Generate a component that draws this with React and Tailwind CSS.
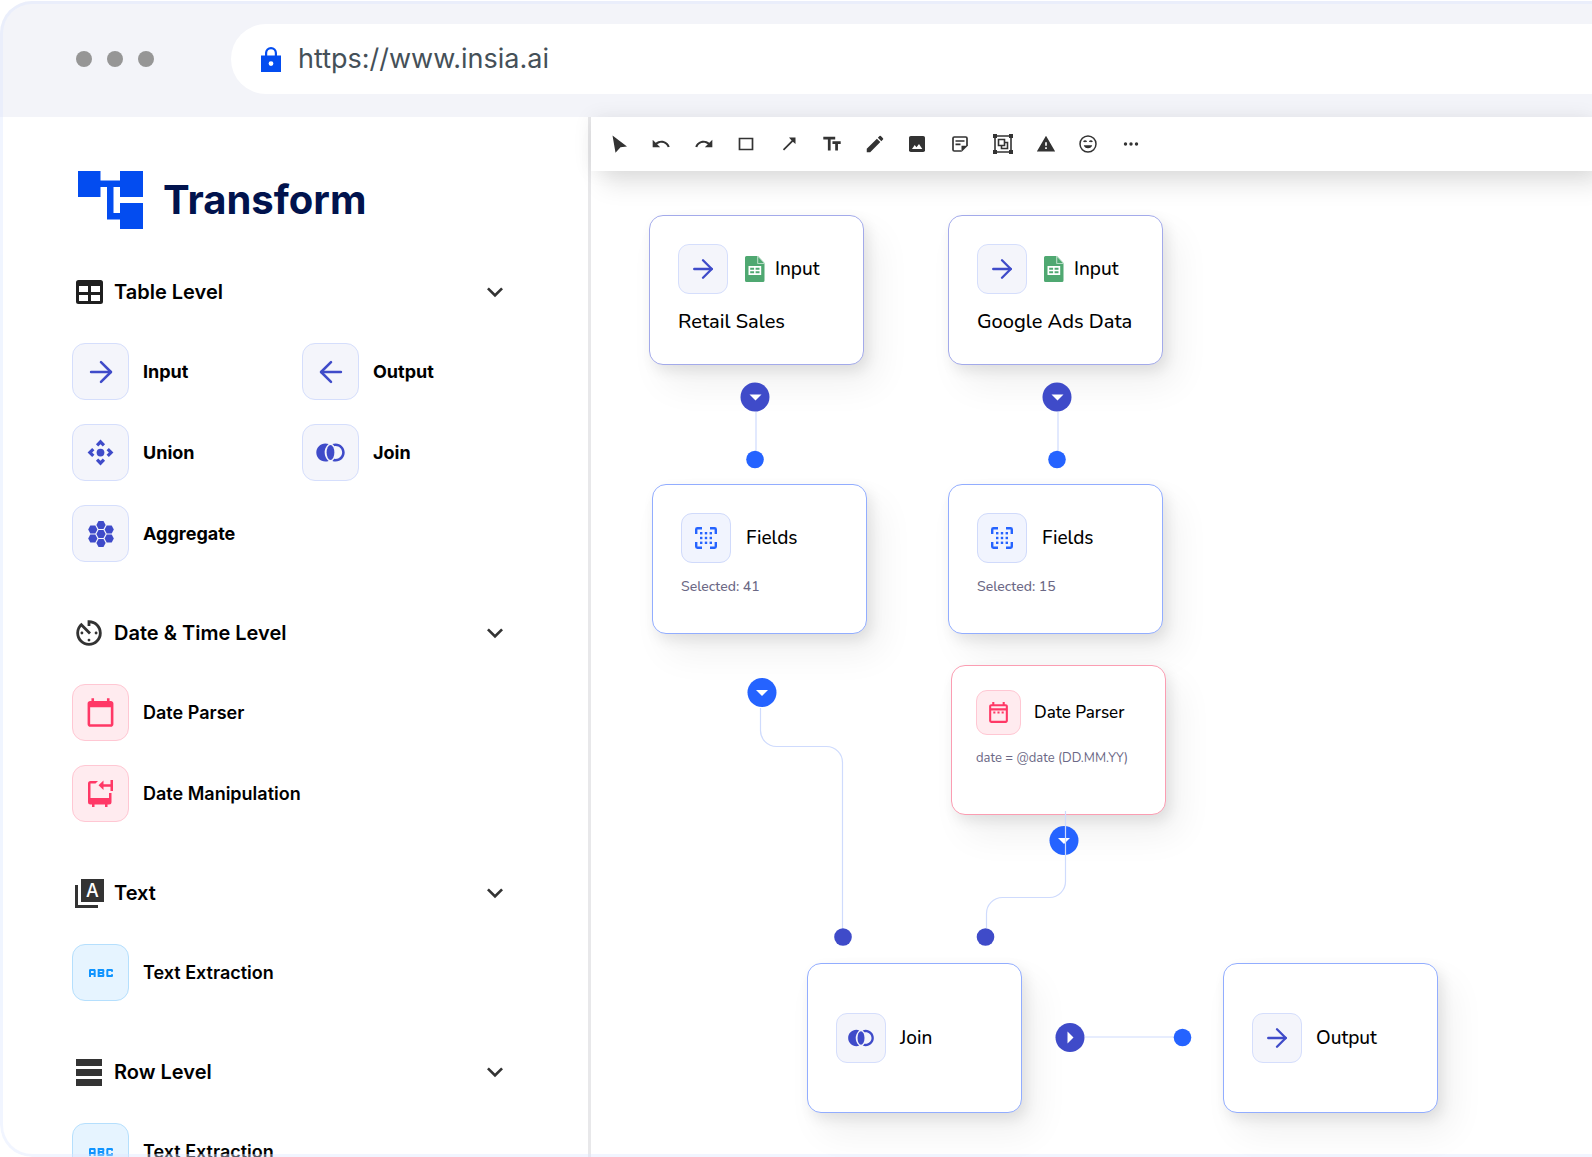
import React, { useState } from 'react'
import { ArrowLeft, ArrowRight } from 'lucide-react'
import {
  MdAbc,
  MdAvTimer,
  MdCalendarToday,
  MdControlCamera,
  MdEdit,
  MdExpandMore,
  MdJoinLeft,
  MdOutlineDateRange,
  MdRedo,
  MdTextFields,
  MdUndo,
  MdWarning,
} from 'react-icons/md'

const LockIcon = () => (
  <svg viewBox="0 0 20 25" className="h-[25px] w-5 shrink-0" aria-hidden="true">
    <path
      fill="#034cf0"
      fillRule="evenodd"
      d="M4 8.500V6a6 6 0 0 1 12 0v2.500h4V25H0V8.500ZM6.200 8.500h7.600V6a3.800 3.800 0 0 0-7.600 0ZM10 14.200a2.400 2.400 0 1 0 0 4.800 2.400 2.400 0 0 0 0-4.800Z"
    />
  </svg>
)

const LogoIcon = () => (
  <svg viewBox="0 0 65 58" className="h-[58px] w-[65px]" fill="#034cf0" aria-hidden="true">
    <path d="M0 0h22.500v9.500H42V0h23v26H42V16h-6.500v26H42V32h23v26H42v-9.500H29V16h-6.500v10H0Z" />
  </svg>
)

const TableIcon = () => (
  <svg viewBox="0 0 27 24" className="h-6 w-[27px]" aria-hidden="true">
    <path
      fill="#1f1f1f"
      fillRule="evenodd"
      d="M2.500 0h22A2.500 2.500 0 0 1 27 2.500v19a2.500 2.500 0 0 1-2.500 2.500h-22A2.500 2.500 0 0 1 0 21.500v-19A2.500 2.500 0 0 1 2.500 0ZM3 6v6h9V6ZM15 6v6h9V6ZM3 15v6h9v-6ZM15 15v6h9v-6Z"
    />
  </svg>
)

const LetterStackIcon = () => (
  <svg viewBox="0 0 29 29" className="size-[29px]" fill="#333" aria-hidden="true">
    <path d="M6 0h23v23H6ZM0 6h3v20h20v3H0Z" />
    <text x="17.500" y="18" textAnchor="middle" fontFamily="Inter, sans-serif" fontSize="18" fontWeight="500" fill="#fff">
      A
    </text>
  </svg>
)

const RowsIcon = () => (
  <svg viewBox="0 0 26 27" className="h-[27px] w-[26px]" fill="#333" aria-hidden="true">
    <path d="M0 0h26v7H0ZM0 10h26v7H0ZM0 20h26v7H0Z" />
  </svg>
)

const hexes = [
  [13, 4],
  [13, 13],
  [13, 22],
  [4.8, 8.5],
  [4.8, 17.5],
  [21.2, 8.5],
  [21.2, 17.5],
]

const HiveIcon = () => (
  <svg viewBox="0 0 26 26" className="size-[26px]" fill="#3f4bc9" aria-hidden="true">
    {hexes.map(([x, y]) => (
      <path
        key={`${x}-${y}`}
        transform={`translate(${x} ${y})`}
        d="M-4.600 0-2.500-3.900h5L4.600 0 2.500 3.900h-5Z"
      />
    ))}
  </svg>
)

const DateMoveIcon = () => (
  <svg viewBox="0 0 25 27" className="h-[27px] w-[25px]" fill="#ff3866" aria-hidden="true">
    <path d="M0 3.500A2.500 2.500 0 0 1 2.500 1H10L7.500 3.500h-5V18H21v-5h2.500v9a2.500 2.500 0 0 1-2.500 2.500h-1.500V27H17v-2.500H6.500V27H4v-2.500H2.500A2.500 2.500 0 0 1 0 22Z" />
    <path d="M22.500 0H25v11h-2.500V6.700H15.500V10L10.500 5.300l5-4.800v3.700h7Z" />
  </svg>
)

const FieldsIcon = () => (
  <svg viewBox="0 0 22 22" className="size-[22px]" fill="#2563ff" aria-hidden="true">
    <path
      d="M1.200 7V2.400Q1.200 1.200 2.400 1.200H7M15 1.200h4.600Q20.800 1.200 20.800 2.400V7M20.800 15v4.600Q20.800 20.800 19.600 20.800H15M7 20.800H2.400Q1.200 20.800 1.200 19.600V15"
      fill="none"
      stroke="#2563ff"
      strokeWidth="2.400"
    />
    {[6.2, 11, 15.8].map((x) =>
      [6.2, 11, 15.8].map((y) => <rect key={`${x}-${y}`} x={x - 1.2} y={y - 1.2} width="2.400" height="2.400" />)
    )}
  </svg>
)

const SheetIcon = () => (
  <svg viewBox="0 0 20 26" className="h-[26px] w-5" aria-hidden="true">
    <path fill="#4fa871" d="M1.500 0H13l6.500 7v17.500a1.500 1.500 0 0 1-1.500 1.500h-16.500A1.500 1.500 0 0 1 0 24.500v-23A1.500 1.500 0 0 1 1.500 0Z" />
    <path fill="#d5ecdd" d="M12.300 0H13l6.500 7v.700h-7.200Z" />
    <path fill="#4fa871" d="M13.200.9 18.800 6.900h-5.600Z" />
    <path
      fill="#fff"
      fillRule="evenodd"
      d="M3.500 10H16.200v9H3.500ZM5.200 11.700V13.700h3.900v-2ZM10.600 11.700V13.700h3.900v-2ZM5.200 15.300v2h3.900v-2ZM10.600 15.300v2h3.900v-2Z"
    />
  </svg>
)

const toolIcon = 'size-6'

const PointerIcon = () => (
  <svg viewBox="0 0 24 24" className={toolIcon} fill="#333" aria-hidden="true">
    <path d="M6.500 3.500 21 14.500 14.500 15.200 9.500 20.800Z" />
  </svg>
)

const RectIcon = () => (
  <svg viewBox="0 0 24 24" className={toolIcon} fill="none" stroke="#333" strokeWidth="1.700" aria-hidden="true">
    <path d="M5.500 6.500h13v11h-13Z" />
  </svg>
)

const LineIcon = () => (
  <svg viewBox="0 0 24 24" className={toolIcon} fill="#333" aria-hidden="true">
    <path d="M12 5.500h6.500v6.500l-2.600-2.200-8.800 8.600-1.200-1.200 8.700-8.700Z" />
  </svg>
)

const ImageIcon = () => (
  <svg viewBox="0 0 24 24" className={toolIcon} aria-hidden="true">
    <rect x="4" y="4" width="16" height="16" rx="1.800" fill="#333" />
    <path fill="#fff" d="m7 17 2.700-4 1.800 2.200 2.500-3.200L17.300 17Z" />
  </svg>
)

const NoteIcon = () => (
  <svg viewBox="0 0 24 24" className={toolIcon} aria-hidden="true">
    <path
      fill="none"
      stroke="#333"
      strokeWidth="1.700"
      d="M13.500 19H6.300A1.300 1.300 0 0 1 5 17.700V6.300A1.300 1.300 0 0 1 6.300 5h11.400A1.300 1.300 0 0 1 19 6.300V14M7.500 9h9M7.500 12.300h5"
    />
    <path fill="#333" d="M13.500 13.800h6.300L13.500 20Z" />
  </svg>
)

const GroupIcon = () => (
  <svg viewBox="0 0 24 24" className={toolIcon} fill="none" stroke="#333" strokeWidth="1.600" aria-hidden="true">
    <path d="M4 4h16v16H4ZM7.500 7.500h6v6h-6ZM13.500 10.500h3v6h-6v-3" />
    <path fill="#333" stroke="none" d="M2 2h4v4H2ZM18 2h4v4h-4ZM2 18h4v4H2ZM18 18h4v4h-4Z" />
  </svg>
)

const SmileIcon = () => (
  <svg viewBox="0 0 24 24" className={toolIcon} fill="none" stroke="#333" strokeWidth="1.500" aria-hidden="true">
    <circle cx="12" cy="12" r="8" />
    <path d="M7.800 10c.5-1.200 2-1.200 2.600 0M13.600 10c.5-1.200 2-1.200 2.600 0" />
    <path fill="#333" stroke="none" d="M7.800 13.300h8.400a4.300 3.800 0 0 1-8.400 0Z" />
  </svg>
)

const MoreIcon = () => (
  <svg viewBox="0 0 24 24" className={toolIcon} fill="#333" aria-hidden="true">
    <circle cx="6.500" cy="12" r="1.700" />
    <circle cx="12" cy="12" r="1.700" />
    <circle cx="17.500" cy="12" r="1.700" />
  </svg>
)

const tools = [
  { name: 'Select', icon: <PointerIcon /> },
  { name: 'Undo', icon: <MdUndo className="size-5" /> },
  { name: 'Redo', icon: <MdRedo className="size-5" /> },
  { name: 'Rectangle', icon: <RectIcon /> },
  { name: 'Arrow', icon: <LineIcon /> },
  { name: 'Text', icon: <MdTextFields className="size-[22px]" /> },
  { name: 'Pencil', icon: <MdEdit className="size-[22px]" /> },
  { name: 'Image', icon: <ImageIcon /> },
  { name: 'Note', icon: <NoteIcon /> },
  { name: 'Group', icon: <GroupIcon /> },
  { name: 'Warning', icon: <MdWarning className="size-5" /> },
  { name: 'Emoji', icon: <SmileIcon /> },
  { name: 'More', icon: <MoreIcon /> },
]

const tones = {
  indigo: 'border-[#d5defc] bg-[#f4f5fb] text-[#3f4bc9]',
  blue: 'border-[#d0dafb] bg-[#f1f4fe] text-[#2563ff]',
  pink: 'border-[#ffc7d3] bg-[#ffebef] text-[#ff3866]',
  sky: 'border-[#b5dffd] bg-[#e6f4ff] text-[#0f94ff]',
}

const sections = [
  {
    title: 'Table Level',
    icon: <TableIcon />,
    items: [
      { label: 'Input', tone: 'indigo', icon: <ArrowRight size={34} strokeWidth={1.8} /> },
      { label: 'Output', tone: 'indigo', icon: <ArrowLeft size={34} strokeWidth={1.8} /> },
      { label: 'Union', tone: 'indigo', icon: <MdControlCamera size={31} /> },
      { label: 'Join', tone: 'indigo', icon: <MdJoinLeft size={31} /> },
      { label: 'Aggregate', tone: 'indigo', icon: <HiveIcon /> },
    ],
    grid: 'grid-cols-[230px_1fr]',
    weight: 'font-bold',
  },
  {
    title: 'Date & Time Level',
    icon: <MdAvTimer size={34} color="#333" />,
    items: [
      { label: 'Date Parser', tone: 'pink', icon: <MdCalendarToday size={31} /> },
      { label: 'Date Manipulation', tone: 'pink', icon: <DateMoveIcon /> },
    ],
    grid: 'grid-cols-1',
    weight: 'font-semibold',
  },
  {
    title: 'Text',
    icon: <LetterStackIcon />,
    items: [{ label: 'Text Extraction', tone: 'sky', icon: <MdAbc size={32} /> }],
    grid: 'grid-cols-1',
    weight: 'font-semibold',
  },
  {
    title: 'Row Level',
    icon: <RowsIcon />,
    items: [{ label: 'Text Extraction', tone: 'sky', icon: <MdAbc size={32} /> }],
    grid: 'grid-cols-1',
    weight: 'font-semibold',
  },
]

const Section = ({ section }) => {
  const [open, setOpen] = useState(true)

  return (
    <section>
      <button
        type="button"
        aria-expanded={open}
        onClick={() => setOpen(!open)}
        className="flex h-8 w-full items-center pr-[77px]"
      >
        <span className="flex w-[34px] justify-center">{section.icon}</span>
        <span className="ml-2 text-[20px] leading-8 font-semibold">{section.title}</span>
        <MdExpandMore size={32} color="#333" className="ml-auto" />
      </button>
      {open && (
        <ul className={`mt-[35px] grid gap-y-6 ${section.grid}`}>
          {section.items.map((item) => (
            <li key={item.label}>
              <button type="button" className="flex items-center gap-[14px]">
                <span className={`flex size-[57px] items-center justify-center rounded-[13px] border ${tones[item.tone]}`}>
                  {item.icon}
                </span>
                <span className={`text-[18px] leading-6 ${section.weight}`}>{item.label}</span>
              </button>
            </li>
          ))}
        </ul>
      )}
    </section>
  )
}

const Node = ({ place, border, children }) => (
  <article
    className={`absolute h-[150px] w-[215px] rounded-[14px] border bg-white shadow-[4px_6px_14px_rgba(0,0,0,0.09),14px_20px_36px_rgba(0,0,0,0.06)] ${place} ${border}`}
  >
    {children}
  </article>
)

const NodeTile = ({ tone, size = 'size-[50px]', children }) => (
  <span className={`flex shrink-0 items-center justify-center rounded-[11px] border ${size} ${tones[tone]}`}>{children}</span>
)

const NodeTitle = ({ children }) => <h3 className="text-[19px] leading-7">{children}</h3>

const InputNode = ({ place, source }) => (
  <Node place={place} border="border-[#a3aaea]">
    <div className="p-7">
      <div className="flex items-center">
        <NodeTile tone="indigo">
          <ArrowRight size={30} strokeWidth={1.9} />
        </NodeTile>
        <span className="mr-[10px] ml-[17px]">
          <SheetIcon />
        </span>
        <NodeTitle>Input</NodeTitle>
      </div>
      <p className="mt-[14px] text-[20px] leading-7 whitespace-nowrap">{source}</p>
    </div>
  </Node>
)

const FieldsNode = ({ place, count }) => (
  <Node place={place} border="border-[#92adff]">
    <div className="p-7">
      <div className="flex items-center gap-[15px]">
        <NodeTile tone="blue">
          <FieldsIcon />
        </NodeTile>
        <NodeTitle>Fields</NodeTitle>
      </div>
      <p className="mt-[14px] text-[14px] leading-5 text-[#6b6885]">Selected: {count}</p>
    </div>
  </Node>
)

const SimpleNode = ({ place, label, icon }) => (
  <Node place={place} border="border-[#92adff]">
    <div className="flex h-full items-center gap-[14px] px-7">
      <NodeTile tone="indigo">{icon}</NodeTile>
      <NodeTitle>{label}</NodeTitle>
    </div>
  </Node>
)

const Connectors = () => (
  <svg width="900" height="985" className="pointer-events-none absolute top-0 left-0" aria-hidden="true">
    <g fill="#3f4bc9">
      <circle cx="164" cy="226" r="14.500" />
      <circle cx="466" cy="226" r="14.500" />
      <circle cx="479" cy="866.500" r="14.500" />
    </g>
    <g fill="#2563ff">
      <circle cx="171" cy="521.500" r="14.500" />
      <circle cx="473" cy="669.500" r="14.500" />
    </g>
    <g fill="#fff">
      <path d="M158.500 223.500h12l-6 6Z" />
      <path d="M460.500 223.500h12l-6 6Z" />
      <path d="M165 519h12l-6 6Z" />
      <path d="M467 667h12l-6 6Z" />
      <path d="M476.500 860.500v12l6-6Z" />
    </g>
    <g fill="none" stroke="#cfdbfd" strokeWidth="1.200">
      <path d="M165 241v39M467 241v39M494 866h90" />
      <path d="M169.500 537v22a16 16 0 0 0 16 16.500h50a16 16 0 0 1 16 16.500v166" />
      <path d="M474.500 640v70a16 16 0 0 1-16 16.500h-47a16 16 0 0 0-16 16.500v14" />
    </g>
    <g fill="#2563ff">
      <circle cx="164" cy="288.500" r="8.800" />
      <circle cx="466" cy="288.500" r="8.800" />
      <circle cx="591.500" cy="866.500" r="8.800" />
    </g>
    <g fill="#3f4bc9">
      <circle cx="252" cy="766" r="8.800" />
      <circle cx="394.500" cy="766" r="8.800" />
    </g>
  </svg>
)

const Canvas = () => (
  <div className="relative min-h-0 flex-1 overflow-hidden font-[Nunito,Lato,sans-serif] font-medium">
    <InputNode place="left-[58px] top-[44px]" source="Retail Sales" />
    <InputNode place="left-[357px] top-[44px]" source="Google Ads Data" />
    <FieldsNode place="left-[61px] top-[313px]" count={41} />
    <FieldsNode place="left-[357px] top-[313px]" count={15} />
    <Node place="left-[360px] top-[494px]" border="border-[#fb9db2]">
      <div className="p-6">
        <div className="flex items-center gap-[13px]">
          <NodeTile tone="pink" size="size-[45px]">
            <MdOutlineDateRange size={25} />
          </NodeTile>
          <h3 className="text-[17px] leading-6">Date Parser</h3>
        </div>
        <p className="mt-[13px] text-[13px] leading-5 font-normal whitespace-nowrap text-[#6b6885]">
          date = @date (DD.MM.YY)
        </p>
      </div>
    </Node>
    <SimpleNode place="left-[216px] top-[792px]" label="Join" icon={<MdJoinLeft size={28} />} />
    <SimpleNode
      place="left-[632px] top-[792px]"
      label="Output"
      icon={<ArrowRight size={30} strokeWidth={1.9} />}
    />
    <Connectors />
  </div>
)

const App = () => {
  const [url, setUrl] = useState('https://www.insia.ai')

  return (
    <div className="h-screen overflow-hidden bg-white pt-px font-[Inter,sans-serif] text-black">
      <div className="relative flex h-full flex-col overflow-hidden rounded-l-[32px]">
        <header className="flex h-[116px] shrink-0 items-center bg-[#f3f4f9] pl-[76px]">
          <div className="flex gap-[15px]">
            <span className="size-4 rounded-full bg-[#969696]" />
            <span className="size-4 rounded-full bg-[#969696]" />
            <span className="size-4 rounded-full bg-[#969696]" />
          </div>
          <div className="ml-[77px] flex h-[70px] flex-1 items-center rounded-l-full bg-white pl-[30px]">
            <LockIcon />
            <input
              type="text"
              aria-label="Address"
              value={url}
              onChange={(e) => setUrl(e.target.value)}
              className="ml-[17px] h-10 min-w-0 flex-1 text-[27px] text-[#455058] outline-none"
            />
          </div>
        </header>

        <div className="flex min-h-0 flex-1">
          <aside className="w-[591px] shrink-0 overflow-hidden border-r-3 border-[#e8e8ea] pt-[54px] pl-[72px]">
            <div className="flex items-center gap-5 pl-1.5">
              <LogoIcon />
              <h1 className="text-[40px] leading-[58px] font-bold text-[#01134d]">Transform</h1>
            </div>
            <nav className="mt-[47px] flex flex-col gap-[55px]">
              {sections.map((section) => (
                <Section key={section.title} section={section} />
              ))}
            </nav>
          </aside>

          <main className="flex min-w-0 flex-1 flex-col">
            <div className="z-10 flex h-[54px] shrink-0 items-center bg-white pl-[15px] shadow-[0_0_20px_rgba(0,0,0,0.07),12px_14px_24px_rgba(0,0,0,0.10)]">
              <div className="flex w-[537px] justify-between text-[#333]">
                {tools.map((tool) => (
                  <button
                    key={tool.name}
                    type="button"
                    aria-label={tool.name}
                    className="flex size-6 items-center justify-center"
                  >
                    {tool.icon}
                  </button>
                ))}
              </div>
            </div>
            <Canvas />
          </main>
        </div>

        {/* translucent frame line, drawn over the content */}
        <div className="pointer-events-none absolute inset-0 z-20 rounded-l-[32px] border-3 border-r-0 border-[#dbe7ff]/40" />
      </div>
    </div>
  )
}

export default App
